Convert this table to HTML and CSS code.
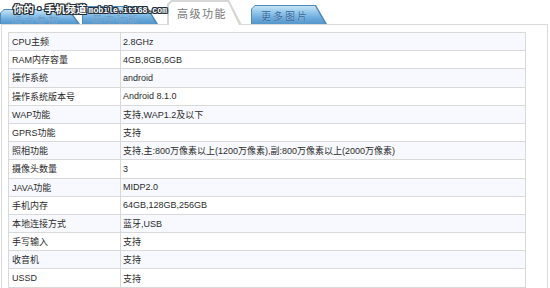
FILE: index.html
```html
<!DOCTYPE html>
<html lang="zh-CN">
<head>
<meta charset="utf-8">
<title>高级功能</title>
<link rel="stylesheet" href="styles.css">
</head>
<body>
<div class="page">
  <div class="tabs">
    <div class="tab tab-blue t1"><div class="tab-fill"><span class="tab-label faint">综合参数</span></div></div>
    <div class="tab tab-blue t2"><div class="tab-fill"><span class="tab-label faint">基本功能</span></div></div>
    <div class="tab tab-active"><div class="active-fill"><span class="active-label">高级功能</span></div></div>
    <div class="tab tab-blue t4"><div class="tab-fill"><span class="tab-label">更多图片</span></div></div>
    <div class="watermark"><span class="wm-cn">你的·手机频道</span><span class="wm-en">mobile.it168.com</span></div>
  </div>
  <div class="panel">
    <table class="spec">
      <tr><td class="k">CPU主频</td><td>2.8GHz</td></tr>
      <tr><td class="k">RAM内存容量</td><td>4GB,8GB,6GB</td></tr>
      <tr><td class="k">操作系统</td><td>android</td></tr>
      <tr><td class="k">操作系统版本号</td><td>Android 8.1.0</td></tr>
      <tr><td class="k">WAP功能</td><td>支持,WAP1.2及以下</td></tr>
      <tr><td class="k">GPRS功能</td><td>支持</td></tr>
      <tr><td class="k">照相功能</td><td>支持,主:800万像素以上(1200万像素),副:800万像素以上(2000万像素)</td></tr>
      <tr><td class="k">摄像头数量</td><td>3</td></tr>
      <tr><td class="k">JAVA功能</td><td>MIDP2.0</td></tr>
      <tr><td class="k">手机内存</td><td>64GB,128GB,256GB</td></tr>
      <tr><td class="k">本地连接方式</td><td>蓝牙,USB</td></tr>
      <tr><td class="k">手写输入</td><td>支持</td></tr>
      <tr><td class="k">收音机</td><td>支持</td></tr>
      <tr><td class="k">USSD</td><td>支持</td></tr>
    </table>
  </div>
</div>
</body>
</html>
```

FILE: styles.css
```css
html, body {
  margin: 0;
  padding: 0;
  background: #ffffff;
}
body {
  font-family: "Liberation Sans", "Noto Sans CJK SC", sans-serif;
  color: #333333;
  width: 550px;
  height: 288px;
  overflow: hidden;
}
.page {
  width: 550px;
}
.tabs {
  position: relative;
  display: flex;
  align-items: flex-end;
  height: 24px;
}
.tab-blue {
  background: #4f8abb;
  clip-path: polygon(0 100%, 0 4px, 4px 0, calc(100% - 11px) 0, 100% 100%);
  padding: 1px 1px 0 1px;
  box-sizing: border-box;
}
.tab-fill {
  display: flex;
  align-items: center;
  justify-content: center;
  height: 100%;
  background: linear-gradient(#c8e4f6 0%, #99cbec 30%, #68a8da 70%, #5596cb 100%);
  clip-path: polygon(0 100%, 0 3px, 3px 0, calc(100% - 11px) 0, calc(100% - 1px) 100%);
  padding-right: 8px;
  padding-top: 1px;
  box-sizing: border-box;
}
.tab-label {
  font-size: 10px;
  letter-spacing: 2px;
  color: #2f649a;
  text-shadow: 0 0 1px #c8e3f7;
}
.tab-label.faint {
  color: #5b8cbc;
  opacity: 0.6;
  position: relative;
  top: 2px;
}
.t1 {
  width: 80px;
  height: 15px;
}
.t2 {
  width: 76px;
  height: 18px;
  margin-left: 2px;
}
.t4 {
  width: 76px;
  height: 19px;
  margin-left: 9px;
}
.tab-active {
  width: 75px;
  height: 25px;
  margin-left: 9px;
  margin-bottom: -1px;
  background: #d6d6d6;
  clip-path: polygon(0 100%, 0 4px, 4px 0, calc(100% - 13px) 0, 100% 100%);
  padding: 2px 0 0 2px;
  box-sizing: border-box;
}
.active-fill {
  height: 100%;
  background: #ffffff;
  clip-path: polygon(0 100%, 0 3px, 3px 0, calc(100% - 14px) 0, calc(100% - 3px) 100%);
  display: flex;
  align-items: center;
  padding-left: 8px;
  padding-bottom: 2px;
  box-sizing: border-box;
}
.active-label {
  font-size: 11px;
  letter-spacing: 1.5px;
  color: #777777;
}
.watermark {
  position: absolute;
  left: 13px;
  top: 2px;
  display: flex;
  align-items: baseline;
  gap: 2px;
  color: #ffffff;
  font-weight: bold;
  text-shadow: 1px 0 0 #1f2a33, -1px 0 0 #1f2a33, 0 1px 0 #1f2a33, 0 -1px 0 #1f2a33,
    1px 1px 0 #1f2a33, -1px -1px 0 #1f2a33, 1px -1px 0 #1f2a33, -1px 1px 0 #1f2a33;
}
.wm-cn {
  font-size: 10.5px;
  line-height: 14px;
  font-family: "Noto Sans CJK SC", sans-serif;
}
.wm-en {
  font-size: 8.2px;
  font-family: "Liberation Mono", monospace;
}
.panel {
  margin-left: 1px;
  width: 547px;
  border: 1px solid #dadada;
  border-bottom: none;
  padding: 7px 0 0 6px;
  box-sizing: border-box;
}
.spec {
  width: 518px;
  border-collapse: collapse;
  font-size: 9px;
}
.spec td {
  border: 1px solid #d9d9d9;
  height: 17.2px;
  padding: 0 0 0 2px;
  white-space: nowrap;
  color: #2b2b2b;
}
.spec td.k {
  width: 108px;
  padding-left: 3px;
}
.spec tr:nth-child(odd) {
  background: #f7f9fe;
}
```
